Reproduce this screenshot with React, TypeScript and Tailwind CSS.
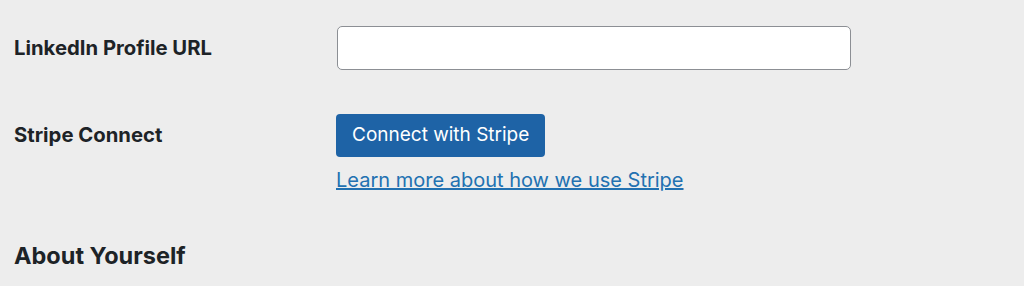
export default function App() {
  return (
    <div
      className="h-[286px] w-[1024px] overflow-hidden bg-[#ededed] pl-[14px] text-[#1d2327]"
      style={{ fontFamily: 'Inter, "Liberation Sans", Arial, sans-serif' }}>
      <div className="flex items-center pt-[26px]">
        <label className="w-[323px] text-[20.3px] font-bold">LinkedIn Profile URL</label>
        <input
          type="text"
          className="h-[44px] w-[514px] rounded-[5px] border-[1.5px] border-[#8c8f94] bg-white"
        />
      </div>
      <div className="mt-[44px] flex items-start">
        <div className="flex h-[43px] w-[322px] items-center text-[20.3px] font-bold">Stripe Connect</div>
        <div className="flex flex-col items-start">
          <button className="h-[43px] rounded-[4px] bg-[#1e63a6] px-[16px] text-[19px] text-white">
            Connect with Stripe
          </button>
          <a href="#" className="mt-[11px] text-[20px] leading-[25px] text-[#2271b1] underline">
            Learn more about how we use Stripe
          </a>
        </div>
      </div>
      <h2 className="mt-[45px] text-[23.5px] font-bold">About Yourself</h2>
    </div>
  )
}
